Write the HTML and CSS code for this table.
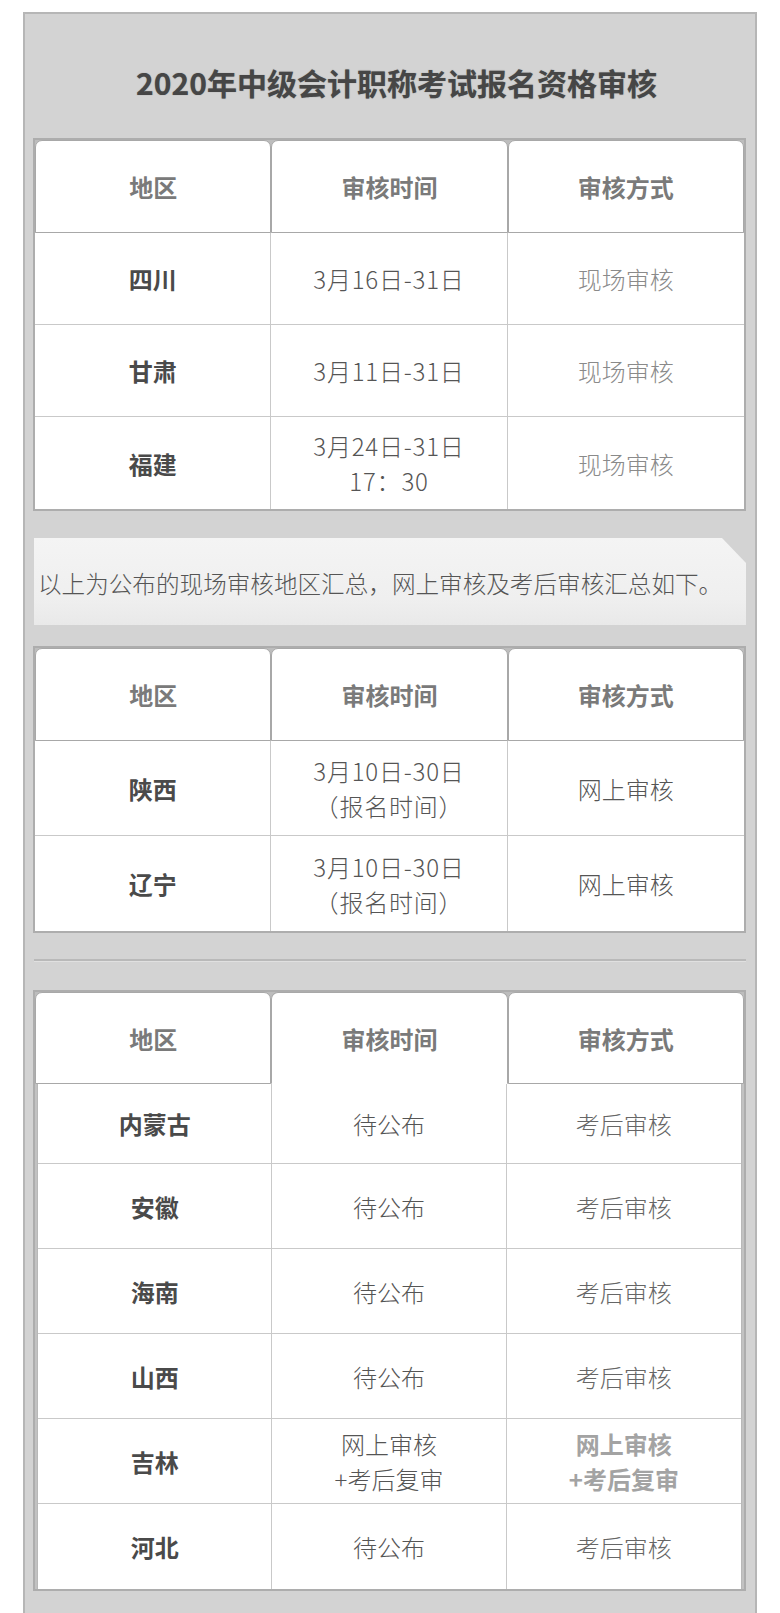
FILE: index.html
```html
<!DOCTYPE html>
<html lang="zh-CN">
<head>
<meta charset="utf-8">
<title>2020年中级会计职称考试报名资格审核</title>
<link rel="stylesheet" href="styles.css">
</head>
<body>
<div class="frame">
  <div class="title-block"><h1 class="title">2020年中级会计职称考试报名资格审核</h1></div>

  <div class="tbl t1">
    <div class="thead">
      <div class="th">地区</div>
      <div class="th">审核时间</div>
      <div class="th">审核方式</div>
    </div>
    <div class="tbody">
      <div class="row">
        <div class="td c1">四川</div>
        <div class="td c2 num">3月16日-31日</div>
        <div class="td c3 light">现场审核</div>
      </div>
      <div class="row">
        <div class="td c1">甘肃</div>
        <div class="td c2 num">3月11日-31日</div>
        <div class="td c3 light">现场审核</div>
      </div>
      <div class="row">
        <div class="td c1">福建</div>
        <div class="td c2 num">3月24日-31日<br>17：30</div>
        <div class="td c3 light">现场审核</div>
      </div>
    </div>
  </div>

  <div class="note"><p class="note-text">以上为公布的现场审核地区汇总，网上审核及考后审核汇总如下。</p></div>

  <div class="tbl t2">
    <div class="thead">
      <div class="th">地区</div>
      <div class="th">审核时间</div>
      <div class="th">审核方式</div>
    </div>
    <div class="tbody">
      <div class="row">
        <div class="td c1">陕西</div>
        <div class="td c2 num">3月10日-30日<br>（报名时间）</div>
        <div class="td c3 dark">网上审核</div>
      </div>
      <div class="row">
        <div class="td c1">辽宁</div>
        <div class="td c2 num">3月10日-30日<br>（报名时间）</div>
        <div class="td c3 dark">网上审核</div>
      </div>
    </div>
  </div>

  <div class="sep"></div>

  <div class="tbl t3">
    <div class="thead">
      <div class="th">地区</div>
      <div class="th open">审核时间</div>
      <div class="th">审核方式</div>
    </div>
    <div class="tbody">
      <div class="row">
        <div class="td c1">内蒙古</div>
        <div class="td c2">待公布</div>
        <div class="td c3">考后审核</div>
      </div>
      <div class="row">
        <div class="td c1">安徽</div>
        <div class="td c2">待公布</div>
        <div class="td c3">考后审核</div>
      </div>
      <div class="row">
        <div class="td c1">海南</div>
        <div class="td c2">待公布</div>
        <div class="td c3">考后审核</div>
      </div>
      <div class="row">
        <div class="td c1">山西</div>
        <div class="td c2">待公布</div>
        <div class="td c3">考后审核</div>
      </div>
      <div class="row">
        <div class="td c1">吉林</div>
        <div class="td c2">网上审核<br>+考后复审</div>
        <div class="td c3 boldlight">网上审核<br>+考后复审</div>
      </div>
      <div class="row">
        <div class="td c1">河北</div>
        <div class="td c2">待公布</div>
        <div class="td c3">考后审核</div>
      </div>
    </div>
  </div>
</div>
</body>
</html>
```

FILE: styles.css
```css
* { box-sizing: border-box; }
html, body { margin: 0; padding: 0; background: #ffffff; }
body {
  font-family: "Noto Sans CJK SC", "Noto Sans", sans-serif;
  color: #555;
}
.frame {
  margin: 12px 23px 0;
  border: 2px solid #b6b6b6;
  border-bottom: none;
  background: #d3d3d3;
  padding: 0 9px 40px 8px;
}
.title-block {
  height: 124px;
  padding: 12px 0 0 14px;
  display: flex;
  align-items: center;
  justify-content: center;
}
.title {
  margin: 0;
  font-size: 30px;
  line-height: 44px;
  font-weight: 700;
  color: #464646;
  text-shadow: 0 0 1px rgba(60,60,60,0.5);
}

.tbl {
  border: 2px solid #adadad;
  background: #c2c2c2;
}
.thead {
  display: grid;
  grid-template-columns: 1fr 1fr 1fr;
  background: #bdbdbd;
}
.th {
  height: 93px;
  background: #fff;
  border: 1px solid #a8a8a8;
  border-radius: 7px 7px 0 0;
  display: flex;
  align-items: center;
  justify-content: center;
  font-size: 24px;
  font-weight: 700;
  color: #7a7a7a;
}
.tbody { background: #fff; }
.row {
  display: grid;
  grid-template-columns: 1fr 1fr 1fr;
  border-bottom: 1px solid #c9c9c9;
}
.row:last-child { border-bottom: none; }
.td {
  display: flex;
  align-items: center;
  justify-content: center;
  text-align: center;
  font-size: 24px;
  line-height: 35px;
  border-right: 1px solid #c9c9c9;
}
.td:last-child { border-right: none; }
.t1 .row { height: 92px; }
.t2 .row { height: 95px; }
.t3 .thead .th { height: 92px; }
.t3 .th.open { border-bottom-color: #fff; }
.t3 .tbody { margin: 0 2px; border-left: 1px solid #b8b8b8; border-right: 1px solid #b8b8b8; }
.t3 .row { height: 85px; }
.t3 .row:first-child { height: 80px; }

.c1 { font-weight: 700; color: #4a4a4a; }
.c2 { font-weight: 300; color: #555; }
.c2.num { letter-spacing: 0.8px; }
.c3 { font-weight: 300; color: #666; }
.c3.light { color: #8a8a8a; }
.c3.dark { color: #555; }
.c3.boldlight { font-weight: 700; color: #a3a3a3; }

.note {
  margin: 27px 0 21px 1px;
  height: 87px;
  background: linear-gradient(180deg, #f4f4f4 0%, #efefef 70%, #e9e9e9 100%);
  clip-path: polygon(0 0, calc(100% - 24px) 0, 100% 25px, 100% 100%, 0 100%);
  display: flex;
  align-items: center;
  padding: 4px 0 0 4px;
}
.note-text {
  margin: 0;
  font-size: 23.6px;
  line-height: 35px;
  font-weight: 300;
  color: #555;
  white-space: nowrap;
}

.sep {
  margin: 26px 0 28px 1px;
  border-top: 2px solid #b9b9b9;
  border-bottom: 1px solid #e0e0e0;
}
```
